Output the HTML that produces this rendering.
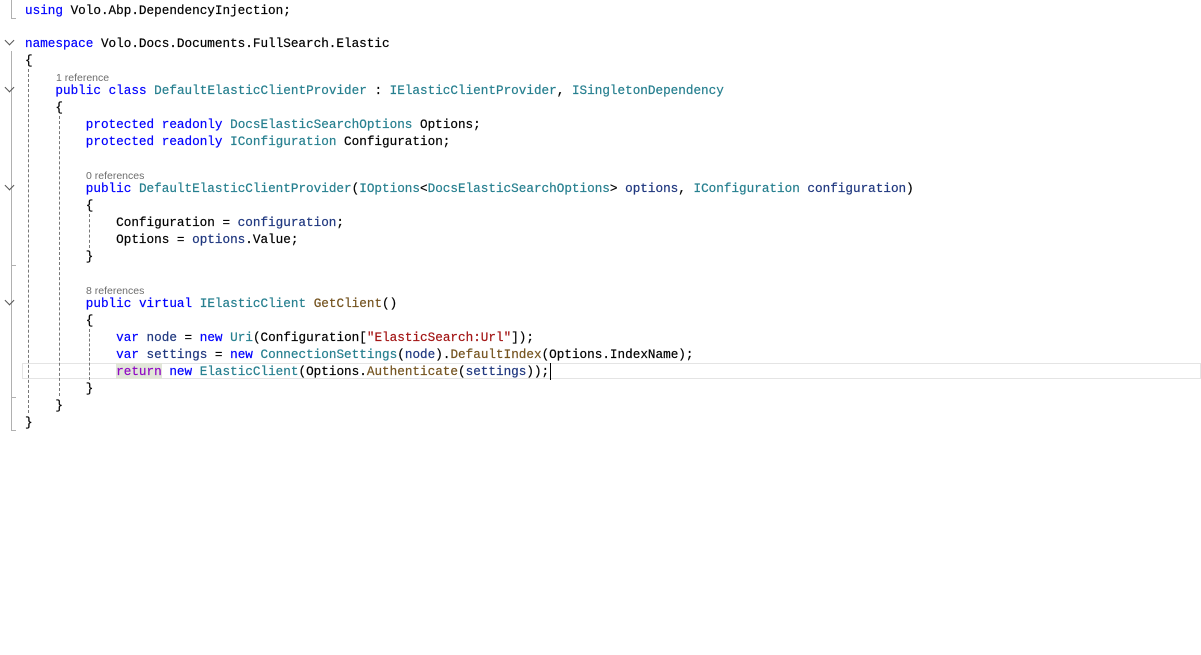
<!DOCTYPE html>
<html><head><meta charset="utf-8"><style>
html,body{margin:0;padding:0;background:#fff;width:1201px;height:655px;overflow:hidden;position:relative}
.l{position:absolute;left:25px;font-family:"Liberation Mono",monospace;font-size:12.66px;line-height:17px;height:17px;white-space:pre;color:#000;-webkit-text-stroke:0.2px}
.c{position:absolute;font-family:"Liberation Sans",sans-serif;font-size:10.5px;color:#6d6d6d;line-height:12px}
.k{color:#0000ff}.t{color:#267f8f}.m{color:#74531f}.s{color:#a31515}.p{color:#1f377f}.r{color:#8f08c4}
.ch{position:absolute;left:6px;width:6px;height:6px;border-right:1px solid #555;border-bottom:1px solid #555;transform:rotate(45deg)}
.v{position:absolute;width:0;border-left:1px solid #b0b0b0}
.d{position:absolute;width:0;border-left:1px dashed #777}
.h{position:absolute;height:0;width:5px;border-top:1px solid #b0b0b0;left:11px}
</style></head><body>
<div style="position:absolute;left:22px;top:363px;width:1179px;height:16px;border:1px solid #e4e4e4;box-sizing:border-box"></div>
<div style="position:absolute;left:116px;top:363px;width:46px;height:16px;background:#e2e6d9"></div>
<div style="position:absolute;left:550px;top:363px;width:1px;height:17px;background:#000"></div>

<div class="v" style="left:11px;top:0;height:18px"></div><div class="h" style="top:18px"></div>
<div class="ch" style="top:37px"></div><div class="v" style="left:11px;top:51px;height:379px"></div>
<div class="ch" style="top:84px"></div>
<div class="ch" style="top:182px"></div>
<div class="ch" style="top:297px"></div>
<div class="h" style="top:265px"></div><div class="h" style="top:397px"></div><div class="h" style="top:430px"></div>
<div class="d" style="left:28px;top:69px;height:344px"></div>
<div class="d" style="left:59px;top:116px;height:280px"></div>
<div class="d" style="left:89px;top:214px;height:34px"></div>
<div class="d" style="left:89px;top:329px;height:51px"></div>

<div class="l" style="top:2px"><span class="k">using</span> Volo.Abp.DependencyInjection;</div>
<div class="l" style="top:35px"><span class="k">namespace</span> Volo.Docs.Documents.FullSearch.Elastic</div>
<div class="l" style="top:52px">{</div>
<div class="c" style="left:56px;top:72px">1 reference</div>
<div class="l" style="top:82px">    <span class="k">public</span> <span class="k">class</span> <span class="t">DefaultElasticClientProvider</span> : <span class="t">IElasticClientProvider</span>, <span class="t">ISingletonDependency</span></div>
<div class="l" style="top:99px">    {</div>
<div class="l" style="top:116px">        <span class="k">protected</span> <span class="k">readonly</span> <span class="t">DocsElasticSearchOptions</span> Options;</div>
<div class="l" style="top:133px">        <span class="k">protected</span> <span class="k">readonly</span> <span class="t">IConfiguration</span> Configuration;</div>
<div class="c" style="left:86px;top:170px">0 references</div>
<div class="l" style="top:180px">        <span class="k">public</span> <span class="t">DefaultElasticClientProvider</span>(<span class="t">IOptions</span>&lt;<span class="t">DocsElasticSearchOptions</span>&gt; <span class="p">options</span>, <span class="t">IConfiguration</span> <span class="p">configuration</span>)</div>
<div class="l" style="top:197px">        {</div>
<div class="l" style="top:214px">            Configuration = <span class="p">configuration</span>;</div>
<div class="l" style="top:231px">            Options = <span class="p">options</span>.Value;</div>
<div class="l" style="top:248px">        }</div>
<div class="c" style="left:86px;top:285px">8 references</div>
<div class="l" style="top:295px">        <span class="k">public</span> <span class="k">virtual</span> <span class="t">IElasticClient</span> <span class="m">GetClient</span>()</div>
<div class="l" style="top:312px">        {</div>
<div class="l" style="top:329px">            <span class="k">var</span> <span class="p">node</span> = <span class="k">new</span> <span class="t">Uri</span>(Configuration[<span class="s">"ElasticSearch:Url"</span>]);</div>
<div class="l" style="top:346px">            <span class="k">var</span> <span class="p">settings</span> = <span class="k">new</span> <span class="t">ConnectionSettings</span>(<span class="p">node</span>).<span class="m">DefaultIndex</span>(Options.IndexName);</div>
<div class="l" style="top:363px">            <span class="r">return</span> <span class="k">new</span> <span class="t">ElasticClient</span>(Options.<span class="m">Authenticate</span>(<span class="p">settings</span>));</div>
<div class="l" style="top:380px">        }</div>
<div class="l" style="top:397px">    }</div>
<div class="l" style="top:414px">}</div>
</body></html>
